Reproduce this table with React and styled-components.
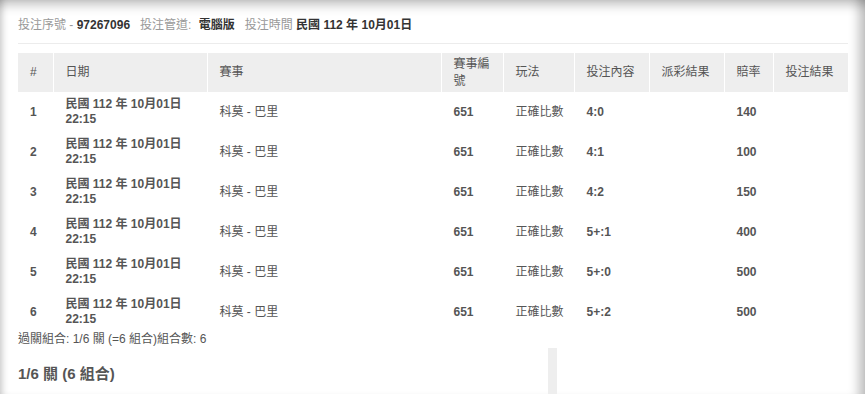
import React from "react";
import styled, { createGlobalStyle } from "styled-components";

const Global = createGlobalStyle`
  html, body { margin: 0; padding: 0; background: #fff; }
  body {
    font-family: "Liberation Sans", Arial, "Noto Sans CJK TC", sans-serif;
    color: #555;
  }
`;

const Page = styled.div`
  width: 865px;
  height: 394px;
  overflow: hidden;
  box-sizing: border-box;
  padding: 17px 17px 0 18px;
  background: #fff;
  box-shadow:
    inset 0 14px 12px -10px rgba(0, 0, 0, 0.28),
    inset 8px 0 7px -6px rgba(0, 0, 0, 0.22),
    inset -14px 0 11px -8px rgba(0, 0, 0, 0.26);
`;

const InfoLine = styled.div`
  font-size: 12px;
  line-height: 16px;
  padding-bottom: 10px;
  border-bottom: 1px solid #ececec;
  white-space: nowrap;
`;

const Label = styled.span`
  color: #999;
`;

const Value = styled.span`
  color: #333;
  font-weight: 700;
  margin-left: ${(p) => p.$gap || 0}px;
  margin-right: 10px;
`;

const Table = styled.table`
  margin-top: 9px;
  width: 830px;
  border-collapse: collapse;
  table-layout: fixed;
`;

const Th = styled.th`
  background: #eeeeee;
  color: #555;
  font-weight: 400;
  font-size: 12px;
  line-height: 17px;
  text-align: left;
  height: 39px;
  padding: 0 11px 0 12px;
  box-sizing: border-box;
  border-left: 1px solid #fff;
  vertical-align: middle;
  &:first-child {
    border-left: none;
  }
`;

const Td = styled.td`
  height: 40px;
  padding: 0 12px;
  box-sizing: border-box;
  font-size: 12px;
  line-height: 15px;
  color: #555;
  white-space: nowrap;
  font-weight: ${(p) => (p.$bold ? 700 : 400)};
  vertical-align: middle;
  border-left: 1px solid transparent;
  &:first-child {
    border-left: none;
  }
`;

const Summary = styled.div`
  font-size: 12px;
  line-height: 14px;
  color: #555;
  white-space: nowrap;
`;

const Lower = styled.div`
  display: flex;
  margin-top: 2px;
  min-height: 60px;
`;

const LowerMain = styled.div`
  width: 530px;
  padding-top: 16px;
`;

const Heading = styled.h3`
  margin: 0;
  font-size: 15px;
  line-height: 20px;
  font-weight: 700;
  color: #555;
`;

const Divider = styled.div`
  width: 9px;
  background: #eeeeee;
`;

const cols = [35, 154, 234, 62, 71, 75, 75, 49, 75];
const headers = ["#", "日期", "賽事", "賽事編號", "玩法", "投注內容", "派彩結果", "賠率", "投注結果"];

const rows = [
  { n: 1, pick: "4:0", odds: "140" },
  { n: 2, pick: "4:1", odds: "100" },
  { n: 3, pick: "4:2", odds: "150" },
  { n: 4, pick: "5+:1", odds: "400" },
  { n: 5, pick: "5+:0", odds: "500" },
  { n: 6, pick: "5+:2", odds: "500" },
];

export default function App() {
  return (
    <>
      <Global />
      <Page>
        <InfoLine>
          <Label>投注序號 - </Label>
          <Value>97267096</Value>
          <Label>投注管道: </Label>
          <Value $gap={4}>電腦版</Value>
          <Label>投注時間 </Label>
          <Value>民國 112 年 10月01日</Value>
        </InfoLine>
        <Table>
          <colgroup>
            {cols.map((w, i) => (
              <col key={i} style={{ width: w }} />
            ))}
          </colgroup>
          <thead>
            <tr>
              {headers.map((h) => (
                <Th key={h}>{h}</Th>
              ))}
            </tr>
          </thead>
          <tbody>
            {rows.map((r) => (
              <tr key={r.n}>
                <Td $bold>{r.n}</Td>
                <Td $bold>
                  民國 112 年 10月01日
                  <br />
                  22:15
                </Td>
                <Td>科莫 - 巴里</Td>
                <Td $bold>651</Td>
                <Td>正確比數</Td>
                <Td $bold>{r.pick}</Td>
                <Td></Td>
                <Td $bold>{r.odds}</Td>
                <Td></Td>
              </tr>
            ))}
          </tbody>
        </Table>
        <Summary>過關組合: 1/6 關 (=6 組合)組合數: 6</Summary>
        <Lower>
          <LowerMain>
            <Heading>1/6 關 (6 組合)</Heading>
          </LowerMain>
          <Divider />
        </Lower>
      </Page>
    </>
  );
}
